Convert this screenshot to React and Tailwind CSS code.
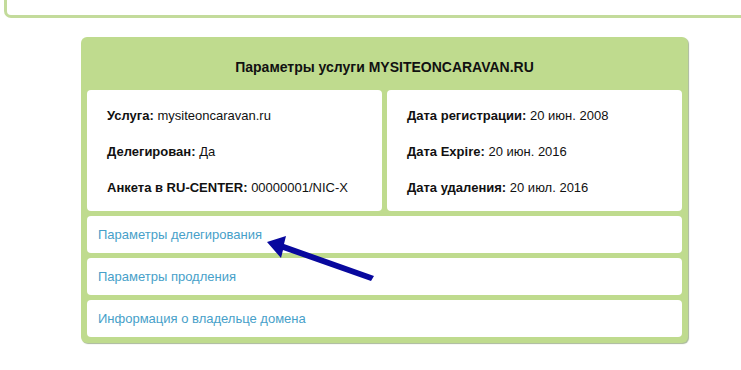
import React from 'react';

const leftRows = [
  { label: 'Услуга:', value: 'mysiteoncaravan.ru' },
  { label: 'Делегирован:', value: 'Да' },
  { label: 'Анкета в RU-CENTER:', value: '00000001/NIC-X' },
];

const rightRows = [
  { label: 'Дата регистрации:', value: '20 июн. 2008' },
  { label: 'Дата Expire:', value: '20 июн. 2016' },
  { label: 'Дата удаления:', value: '20 июл. 2016' },
];

const links = ['Параметры делегирования', 'Параметры продления', 'Информация о владельце домена'];

const InfoBox = ({ rows }) => (
  <div className="bg-white rounded-[4px] pl-[20px] pt-[18px] pb-[15px] flex flex-col gap-[20px]">
    {rows.map((row) => (
      <div key={row.label} className="text-[13px] leading-[16px] text-[#111]">
        <span className="font-bold">{row.label}</span> {row.value}
      </div>
    ))}
  </div>
);

const App = () => {
  return (
    <div className="relative w-[741px] h-[370px] bg-white overflow-hidden font-['Liberation_Sans',Arial,sans-serif]">
      <div className="ml-[4px] w-[760px] h-[18px] border-l-[3px] border-b-[3px] border-[#c3db9b] rounded-bl-[7px]"></div>

      <div className="ml-[81px] mt-[19px] w-[607px] bg-[#bfdb8e] rounded-[6px] shadow-[1px_1px_1px_#a9b99a] px-[6px] pb-[6px]">
        <div className="pt-[21px] pb-[14px] text-center text-[14px] leading-[18px] font-bold text-[#111]">
          Параметры услуги MYSITEONCARAVAN.RU
        </div>
        <div className="grid grid-cols-2 gap-[5px]">
          <InfoBox rows={leftRows} />
          <InfoBox rows={rightRows} />
        </div>
        <div className="mt-[5px] flex flex-col gap-[5px]">
          {links.map((link) => (
            <div key={link} className="bg-white rounded-[4px] h-[37px] flex items-center pl-[11px]">
              <a href="#" className="text-[13px] text-[#479fc9]">{link}</a>
            </div>
          ))}
        </div>
      </div>

      {/* annotation arrow over the list */}
      <svg className="absolute left-0 top-0 pointer-events-none" width="741" height="370">
        <path d="M374 276 L371 281 L283 250 L281 258 L267 242 L286 236 L284 244 Z" fill="#08089e" />
      </svg>
    </div>
  );
};

export default App;
